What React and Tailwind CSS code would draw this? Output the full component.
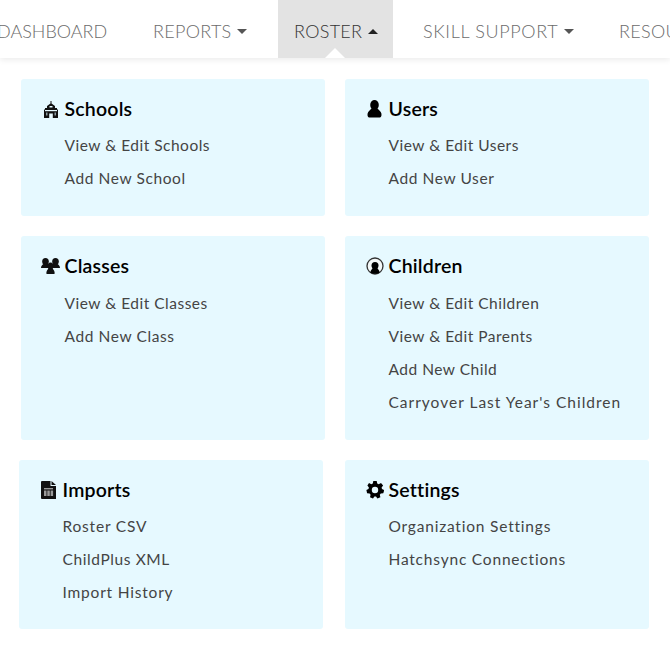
import React from 'react';

const SchoolIcon = () => (
  <svg width="14" height="17" viewBox="0 0 14 17" className="shrink-0">
    <path fill="#111" d="M6.500 0h1v2.500L11 5v2h2v1.500h1V17H8.800v-4.500H5.200V17H0V8.500h1V7h2V5l3.500-2.500z" />
    <rect x="5.500" y="5" width="3" height="1.500" fill="#e6f9ff" />
    <rect x="1" y="9" width="12" height="1.200" fill="#e6f9ff" />
    <rect x="2" y="11.500" width="1.500" height="3" fill="#8a9aa0" />
    <rect x="10.500" y="11.500" width="1.500" height="3" fill="#8a9aa0" />
  </svg>
);

const UserIcon = () => (
  <svg width="15" height="18" viewBox="0 0 15 18" className="shrink-0">
    <ellipse cx="7.500" cy="5" rx="4.300" ry="5" fill="#000" />
    <path fill="#000" d="M4.500 8.500C3.500 10 1 11 .6 13.500c-.3 2 0 3.500 1.400 4h11c1.400-.5 1.700-2 1.400-4C14 11 11.500 10 10.500 8.500z" />
  </svg>
);

const ClassesIcon = () => (
  <svg width="19" height="16" viewBox="0 0 19 16" className="shrink-0">
    <g fill="#111">
      <ellipse cx="4.500" cy="3.500" rx="3.300" ry="3.500" />
      <path d="M0 10c0-2 1-3 2.500-4h4.500c.6.500 1 .8 1.500 1.300V10z" />
      <ellipse cx="14.500" cy="3.500" rx="3.300" ry="3.500" />
      <path d="M19 10c0-2-1-3-2.500-4H12c-.6.500-1 .8-1.500 1.300V10z" />
      <ellipse cx="9.500" cy="8" rx="3" ry="3.500" />
      <path d="M5.500 16c-.5-2 .5-4 2-5.500h4c1.500 1.500 2.500 3.500 2 5.500z" />
    </g>
  </svg>
);

const ChildIcon = () => (
  <svg width="18" height="18" viewBox="0 0 18 18" className="shrink-0">
    <circle cx="9" cy="9" r="8" fill="#f4f8f8" stroke="#333" strokeWidth="1.300" />
    <circle cx="9" cy="8.500" r="3.500" fill="#000" />
    <path fill="#000" d="M7 10.500c-.5 1.500-2.300 2-2.700 5 1.200.8 2.900 1.300 4.700 1.300s3.500-.5 4.700-1.300c-.4-3-2.200-3.500-2.700-5z" />
  </svg>
);

const ImportIcon = () => (
  <svg width="15" height="18" viewBox="0 0 15 18" className="shrink-0">
    <path fill="#111" d="M1 0h8.500v5H15v13H1a1 1 0 0 1-1-1V1a1 1 0 0 1 1-1z" />
    <path fill="#111" d="M10.500 0 15 4h-4.500z" />
    <g fill="#9a9a9a">
      <rect x="3" y="7" width="9" height="1.400" />
      <rect x="3" y="9.500" width="2.500" height="5.500" />
      <rect x="6.300" y="9.500" width="2.500" height="5.500" />
      <rect x="9.600" y="9.500" width="2.500" height="5.500" />
    </g>
  </svg>
);

const GearIcon = () => (
  <svg width="18" height="18" viewBox="0 0 18 18" className="shrink-0">
    <path
      fill="#000"
      fillRule="evenodd"
      d="M7.300 0h3.400l.5 2.500 1.500.7L15 1.900l2.100 2.600-1.500 2 .4 1.500 2 1-.1 1.300-.6 2-2.500.2-1 1.300.6 2.400-3 1.300-1.400-2h-1.600l-1.400 2-3-1.300.6-2.400-1-1.300-2.500-.2-.7-3.300 2.100-1 .4-1.500-1.500-2L3 1.900l2.300 1.300 1.500-.7zM9 5.800a3.200 3.200 0 1 0 0 6.400 3.200 3.200 0 0 0 0-6.400z"
    />
  </svg>
);

const Caret = ({ up }) => (
  <span
    className={`ml-1.5 w-0 h-0 border-x-[5.500px] border-x-transparent ${
      up ? 'border-b-[5.500px] border-b-[#222]' : 'border-t-[5.500px] border-t-[#555]'
    }`}
  />
);

const cards = [
  { title: 'Schools', icon: <SchoolIcon />, links: ['View & Edit Schools', 'Add New School'], h: 'h-[137px]' },
  { title: 'Users', icon: <UserIcon />, links: ['View & Edit Users', 'Add New User'], h: 'h-[137px]' },
  { title: 'Classes', icon: <ClassesIcon />, links: ['View & Edit Classes', 'Add New Class'], h: 'h-[204px]', listTop: 'mt-[10px]' },
  {
    title: 'Children',
    icon: <ChildIcon />,
    links: ['View & Edit Children', 'View & Edit Parents', 'Add New Child', "Carryover Last Year's Children"],
    h: 'h-[204px]',
    listTop: 'mt-[10px]',
  },
  { title: 'Imports', icon: <ImportIcon />, links: ['Roster CSV', 'ChildPlus XML', 'Import History'], h: 'h-[169px]', shift: true },
  { title: 'Settings', icon: <GearIcon />, links: ['Organization Settings', 'Hatchsync Connections'], h: 'h-[169px]' },
];

const linkTracking = (link) => {
  if (link.startsWith('Carryover')) return 'tracking-[1px]';
  if (link.startsWith('View') || link === 'Add New Child') return 'tracking-[0.5px]';
  if (/^(Organization|Hatchsync|Roster|Import)/.test(link)) return 'tracking-[0.8px]';
  return 'tracking-[0.6px]';
};

function Card({ title, icon, links, h, shift, listTop = 'mt-[9px]' }) {
  return (
    <div className={`${h} ${shift ? '-ml-0.5' : ''} w-[304px] rounded-[3px] bg-[#e6f9ff] pt-[19px] pl-[43.500px]`}>
      <div className="relative flex h-[22px] items-center text-[19.500px] font-semibold tracking-[0.2px] text-black">
        <span className="absolute right-full mr-[2px] flex w-[24px] justify-center">{icon}</span>
        {title}
      </div>
      <ul className={listTop}>
        {links.map((link) => (
          <li key={link} className={`h-[33px] text-[15.500px] leading-[33px] text-[#444] ${linkTracking(link)}`}>
            {link}
          </li>
        ))}
      </ul>
    </div>
  );
}

export default function App() {
  return (
    <div className="h-[649px] w-[670px] overflow-hidden bg-white font-['Lato','Liberation_Sans',sans-serif]">
      <nav className="relative z-10 flex h-[58px] items-stretch whitespace-nowrap text-[18px] font-light tracking-[0.3px] text-[#6b6b6b] shadow-[0_2px_6px_rgba(0,0,0,0.08)]">
        <span className="flex w-[153px] shrink-0 items-center pt-[4px] -indent-[3px] tracking-[0px]">DASHBOARD</span>
        <span className="flex w-[125px] shrink-0 items-center pt-[4px]">
          REPORTS
          <Caret />
        </span>
        <span className="relative flex w-[115px] shrink-0 items-center bg-[#e3e3e3] pt-[4px] pl-[16px] text-[#333]">
          ROSTER
          <Caret up />
          <span className="absolute bottom-0 left-[47px] h-0 w-0 border-x-[10px] border-b-[10px] border-x-transparent border-b-white" />
        </span>
        <span className="ml-[30px] flex w-[196px] shrink-0 items-center pt-[4px] tracking-[0.65px]">
          SKILL SUPPORT
          <Caret />
        </span>
        <span className="flex shrink-0 items-center pt-[4px]">RESOURCES</span>
      </nav>
      <main className="grid grid-cols-[304px_304px] gap-x-[20px] gap-y-[20px] pt-[21px] pl-[21px]">
        {cards.map((card) => (
          <Card key={card.title} {...card} />
        ))}
      </main>
    </div>
  );
}
